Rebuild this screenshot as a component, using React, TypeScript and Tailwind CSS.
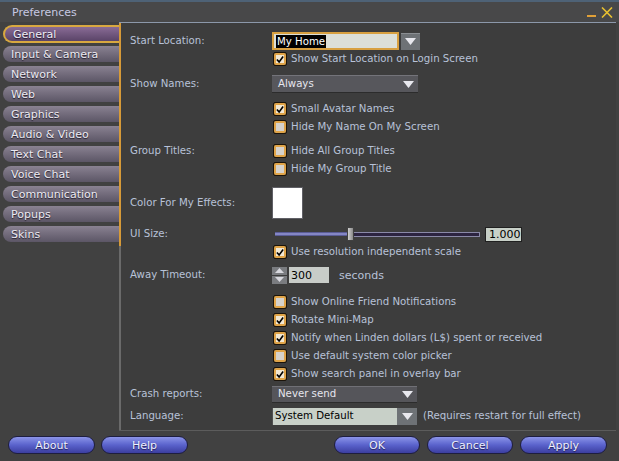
import React from "react";

const tabs = [
  "General",
  "Input & Camera",
  "Network",
  "Web",
  "Graphics",
  "Audio & Video",
  "Text Chat",
  "Voice Chat",
  "Communication",
  "Popups",
  "Skins",
];

function Check({ checked }: { checked?: boolean }) {
  return (
    <div className="w-[14px] h-[14px] rounded-[2px] border border-[#1c140a] shrink-0">
      <div
        className={
          "w-full h-full rounded-[2px] border-[2px] border-[#e0a448] flex items-center justify-center " +
          (checked ? "bg-[#f2e8d4]" : "bg-[#d6d2cc]")
        }
      >
        {checked && (
          <svg width="9" height="9" viewBox="0 0 9 9">
            <path d="M1 4.5 L3.5 7.2 L8 1.2" stroke="#000" strokeWidth="1.8" fill="none" />
          </svg>
        )}
      </div>
    </div>
  );
}

function Tri({ color = "#e8e8ee" }: { color?: string }) {
  return (
    <svg width="11" height="7" viewBox="0 0 11 7">
      <path d="M0 0 H11 L5.5 7 Z" fill={color} />
    </svg>
  );
}

function Row({
  label,
  h = "h-[18px]",
  mt = "",
  children,
}: {
  label?: string;
  h?: string;
  mt?: string;
  children?: React.ReactNode;
}) {
  return (
    <div className={"flex items-center " + h + " " + mt}>
      <div className="w-[142px] shrink-0 text-[#b8c2d8]">{label}</div>
      <div className="flex items-center flex-1">{children}</div>
    </div>
  );
}

function CheckRow({ text, checked, label, mt }: { text: string; checked?: boolean; label?: string; mt?: string }) {
  return (
    <Row label={label} mt={mt}>
      <div className="ml-[1px]">
        <Check checked={checked} />
      </div>
      <span className="ml-[4px] text-[#b8c2d8]">{text}</span>
    </Row>
  );
}

function PillButton({ text, w }: { text: string; w: string }) {
  return (
    <div
      className={
        w +
        " h-[18px] rounded-full border border-[#1e1e40] bg-gradient-to-b from-[#8c94e8] via-[#5a62cc] to-[#3c3ea0] flex items-center justify-center text-[11px] text-[#eef0ff] [text-shadow:0_1px_1px_#202050]"
      }
    >
      {text}
    </div>
  );
}

export default function App() {
  return (
    <div
      className="w-[619px] h-[461px] bg-[#414141] flex flex-col overflow-hidden text-[10.2px] leading-none"
      style={{ fontFamily: '"DejaVu Sans", "Liberation Sans", sans-serif' }}
    >
      {/* title bar */}
      <div className="h-[22px] shrink-0 border-t-[2px] border-[#4e6276] bg-[#484849] flex items-center justify-between pl-[12px] pr-[6px]">
        <span className="text-[11px] text-[#c6c8e2]">Preferences</span>
        <div className="flex items-center gap-[5px]">
          <div className="w-[9px] h-[2px] bg-[#e0a038] mt-[8px]" />
          <svg width="12" height="11" viewBox="0 0 12 11">
            <path d="M1 0.5 L11 10.5 M11 0.5 L1 10.5" stroke="#e8c030" strokeWidth="1.6" />
          </svg>
        </div>
      </div>

      <div className="flex flex-1 min-h-0">
        {/* tabs */}
        <div className="w-[119px] shrink-0 pt-[4px] pl-[3px] flex flex-col gap-[4px]">
          {tabs.map((t, i) =>
            i === 0 ? (
              <div
                key={t}
                className="h-[18px] -mt-[1px] -mb-[1px] mr-[-1px] rounded-l-full border-[2px] border-r-0 border-[#d8a840] bg-gradient-to-b from-[#8a6c96] to-[#5a4468] flex items-center pl-[8px] text-[11px] text-[#f0ecf6] [text-shadow:0_1px_1px_#201828]"
              >
                {t}
              </div>
            ) : (
              <div
                key={t}
                className="h-[16px] rounded-l-[9px] bg-gradient-to-b from-[#8a8292] to-[#5c5666] flex items-center pl-[8px] text-[11px] text-[#eceaf2] [text-shadow:0_1px_1px_#201c28]"
              >
                {t}
              </div>
            )
          )}
        </div>

        {/* panel */}
        <div className="flex-1 flex flex-col mr-[3px]">
          <div className="flex flex-1 h-[409px] border-t border-[#8c98aa] border-b border-b-[#5c5c5c] bg-[#3d3d3d]">
            <div className="w-[2px] flex flex-col shrink-0">
              <div className="h-[223px] bg-[#d69a38]" />
              <div className="flex-1 bg-[#6a6a6a]" />
            </div>
            <div className="flex-1 flex flex-col pl-[9px] pt-[9px]">
              <Row label="Start Location:">
                <div className="w-[127px] h-[18px] border-[2px] border-[#d8a040] bg-[#dcdfd8] flex items-center pl-[2px]">
                  <span className="bg-[#000] text-white px-[1px] leading-[13px]">My Home</span>
                </div>
                <div className="ml-[2px] w-[19px] h-[17px] bg-[#6e7276] border-t border-[#8a8e92] flex items-center justify-center">
                  <Tri />
                </div>
              </Row>
              <CheckRow text="Show Start Location on Login Screen" checked />

              <Row label="Show Names:" mt="mt-[7px]">
                <div className="w-[146px] h-[18px] bg-[#57575c] border-t border-[#74747a] border-b border-b-[#2c2c2c] flex items-center justify-between pl-[6px] pr-[4px] text-[#e6e6ee]">
                  <span>Always</span>
                  <Tri />
                </div>
              </Row>
              <CheckRow text="Small Avatar Names" checked mt="mt-[7px]" />
              <CheckRow text="Hide My Name On My Screen" />

              <CheckRow label="Group Titles:" text="Hide All Group Titles" mt="mt-[6px]" />
              <CheckRow text="Hide My Group Title" />

              <Row label="Color For My Effects:" h="h-[32px]" mt="mt-[9px]">
                <div className="w-[31px] h-[32px] bg-white border border-[#606066]" />
              </Row>

              <Row label="UI Size:" mt="mt-[6px]">
                <div className="relative w-[205px] h-[18px] ml-[3px] flex items-center">
                  <div className="w-[72px] h-[4px] bg-[#8486c4] border-y border-[#5a5c96]" />
                  <div className="flex-1 h-[5px] bg-[#2c2440] border border-[#8a8aa8]" />
                  <div className="absolute left-[72px] top-[2px] w-[7px] h-[14px] bg-gradient-to-r from-[#d0d0d0] to-[#8a8a8a] border border-[#404040]" />
                </div>
                <div className="ml-[5px] w-[37px] h-[15px] bg-[#c8d0c8] border border-[#202020] flex items-center pl-[3px] text-[#000] text-[11px]">
                  1.000
                </div>
              </Row>
              <CheckRow text="Use resolution independent scale" checked />

              <Row label="Away Timeout:" mt="mt-[5px]">
                <div className="w-[15px] h-[17px] flex flex-col gap-[1px]">
                  <div className="flex-1 bg-[#7a7c80] flex items-center justify-center">
                    <svg width="9" height="5" viewBox="0 0 9 5">
                      <path d="M0 5 H9 L4.5 0 Z" fill="#d8d8de" />
                    </svg>
                  </div>
                  <div className="flex-1 bg-[#7a7c80] flex items-center justify-center">
                    <svg width="9" height="5" viewBox="0 0 9 5">
                      <path d="M0 0 H9 L4.5 5 Z" fill="#d8d8de" />
                    </svg>
                  </div>
                </div>
                <div className="ml-[2px] w-[40px] h-[16px] bg-[#c8ccc8] flex items-center pl-[2px] text-[#000] text-[11px]">
                  300
                </div>
                <span className="ml-[10px] text-[#b8c2d8] text-[11px]">seconds</span>
              </Row>

              <CheckRow text="Show Online Friend Notifications" mt="mt-[9px]" />
              <CheckRow text="Rotate Mini-Map" checked />
              <CheckRow text="Notify when Linden dollars (L$) spent or received" checked />
              <CheckRow text="Use default system color picker" />
              <CheckRow text="Show search panel in overlay bar" checked />

              <Row label="Crash reports:" mt="mt-[2px]">
                <div className="w-[145px] h-[17px] bg-[#55555a] border-t border-[#707076] border-b border-b-[#2c2c2c] flex items-center justify-between pl-[6px] pr-[4px] text-[#e6e6ee]">
                  <span>Never send</span>
                  <Tri />
                </div>
              </Row>
              <Row label="Language:" mt="mt-[4px]">
                <div className="w-[125px] h-[17px] bg-[#c8d0c8] border-l border-[#505050] flex items-center pl-[2px] text-[#000]">
                  System Default
                </div>
                <div className="w-[20px] h-[17px] bg-[#6e7276] flex items-center justify-center">
                  <Tri />
                </div>
                <span className="ml-[6px] text-[#b8c2d8]">(Requires restart for full effect)</span>
              </Row>
            </div>
          </div>
        </div>
      </div>

      {/* bottom buttons */}
      <div className="h-[30px] shrink-0 flex items-center pl-[8px] pr-[12px] pb-[2px]">
        <PillButton text="About" w="w-[87px]" />
        <div className="ml-[6px]">
          <PillButton text="Help" w="w-[87px]" />
        </div>
        <div className="flex-1" />
        <PillButton text="OK" w="w-[86px]" />
        <div className="ml-[7px]">
          <PillButton text="Cancel" w="w-[86px]" />
        </div>
        <div className="ml-[7px]">
          <PillButton text="Apply" w="w-[87px]" />
        </div>
      </div>
    </div>
  );
}
